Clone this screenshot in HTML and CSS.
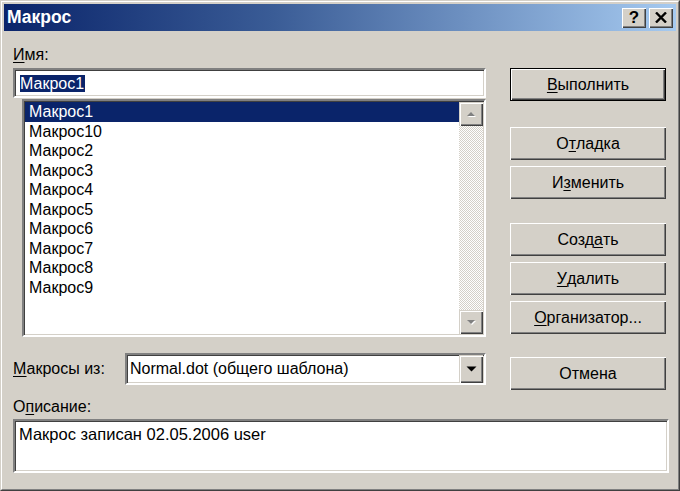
FILE: index.html
```html
<!DOCTYPE html>
<html lang="ru">
<head>
<meta charset="utf-8">
<title>Макрос</title>
<link rel="stylesheet" href="styles.css">
</head>
<body>
<div class="window">
  <div class="frame">
    <div class="titlebar">
      <div class="title">Макрос</div>
      <div class="tbtn help">?</div>
      <div class="tbtn close">
        <svg width="12" height="11" viewBox="0 0 12 11"><path d="M1 0.5 L11 10.5 M11 0.5 L1 10.5" stroke="#000" stroke-width="2.4" fill="none"/></svg>
      </div>
    </div>
    <div class="body">
      <div class="main">
        <div class="left">
          <div class="label"><u>И</u>мя:</div>
          <div class="field name-field"><span class="sel">Макрос1</span></div>
          <div class="field listbox">
            <div class="items">
              <div class="item selected">Макрос1</div>
              <div class="item">Макрос10</div>
              <div class="item">Макрос2</div>
              <div class="item">Макрос3</div>
              <div class="item">Макрос4</div>
              <div class="item">Макрос5</div>
              <div class="item">Макрос6</div>
              <div class="item">Макрос7</div>
              <div class="item">Макрос8</div>
              <div class="item">Макрос9</div>
            </div>
            <div class="vscroll">
              <div class="sbtn">
                <svg width="11" height="7" viewBox="0 0 11 7"><polygon points="2,6 6,2 10,6" fill="#fff"/><polygon points="1,5 5,1 9,5" fill="#808080"/></svg>
              </div>
              <div class="track"></div>
              <div class="sbtn">
                <svg width="11" height="7" viewBox="0 0 11 7"><polygon points="2,2 10,2 6,6" fill="#fff"/><polygon points="1,1 9,1 5,5" fill="#808080"/></svg>
              </div>
            </div>
          </div>
          <div class="combo-row">
            <div class="combo-label"><u>М</u>акросы из:</div>
            <div class="field combo">
              <div class="combo-text">Normal.dot (общего шаблона)</div>
              <div class="sbtn drop">
                <svg width="11" height="6" viewBox="0 0 11 6"><polygon points="0.5,0.5 10.5,0.5 5.5,5.5" fill="#000"/></svg>
              </div>
            </div>
          </div>
        </div>
        <div class="right">
          <div class="btn default"><span><u>В</u>ыполнить</span></div>
          <div class="btn gap-a">О<u>т</u>ладка</div>
          <div class="btn gap-s">И<u>з</u>менить</div>
          <div class="btn gap-b">Созд<u>а</u>ть</div>
          <div class="btn gap-s"><u>У</u>далить</div>
          <div class="btn gap-s"><u>О</u>рганизатор...</div>
          <div class="btn gap-c">Отмена</div>
        </div>
      </div>
      <div class="label desc-label">О<u>п</u>исание:</div>
      <div class="field desc">Макрос записан 02.05.2006 user</div>
    </div>
  </div>
</div>
</body>
</html>
```
FILE: styles.css
```css
html, body {
  margin: 0;
  padding: 0;
}
body {
  width: 680px;
  height: 491px;
  overflow: hidden;
  font-family: "Liberation Sans", Arial, sans-serif;
  font-size: 16px;
  color: #000;
  background: #d4d0c8;
}
u {
  text-decoration: underline;
  text-decoration-thickness: 1px;
  text-underline-offset: 2px;
}
.window {
  width: 680px;
  height: 491px;
  box-sizing: border-box;
  background: #d4d0c8;
  border: 1px solid;
  border-color: #d4d0c8 #404040 #404040 #d4d0c8;
}
.frame {
  height: 100%;
  box-sizing: border-box;
  border: 1px solid;
  border-color: #fff #808080 #808080 #fff;
  padding: 2px;
  display: flex;
  flex-direction: column;
}
.titlebar {
  height: 27px;
  flex: none;
  display: flex;
  align-items: center;
  padding: 0 3px 0 3px;
  background: linear-gradient(to right, #0a246a 0%, #3a5c96 40%, #a6caf0 100%);
  color: #fff;
  font-weight: bold;
  font-size: 17.5px;
}
.title {
  flex: 1;
  padding-left: 0;
  margin-top: -1px;
}
.tbtn {
  width: 24px;
  height: 20px;
  box-sizing: border-box;
  margin-left: 3px;
  background: #d4d0c8;
  box-shadow: inset 1px 1px #fff, inset -1px -1px #404040, inset -2px -2px #808080;
  display: flex;
  align-items: center;
  justify-content: center;
  color: #000;
  font-size: 17px;
  font-weight: bold;
  line-height: 20px;
}
.tbtn.help {
  padding-top: 1px;
}
.body {
  flex: 1;
  display: flex;
  flex-direction: column;
  padding: 15px 10px 0 9px;
}
.main {
  display: flex;
  gap: 24px;
}
.left {
  width: 473px;
  display: flex;
  flex-direction: column;
}
.right {
  width: 156px;
  margin-top: 22px;
  display: flex;
  flex-direction: column;
}
.label {
  line-height: 18px;
  height: 18px;
}
.field {
  box-sizing: border-box;
  background: #fff;
  border: 2px solid;
  border-color: #808080 #fff #fff #808080;
  box-shadow: inset 1px 1px #404040, inset -1px -1px #d4d0c8;
}
.name-field {
  margin-top: 4px;
  height: 30px;
  padding: 0 5px;
  display: flex;
  align-items: center;
}
.sel {
  background: #0a246a;
  color: #fff;
  line-height: 17px;
  padding: 0 1px 0 0;
}
.listbox {
  margin-top: 1px;
  margin-left: 9px;
  height: 238px;
  display: flex;
  padding: 1px 1px 1px 1px;
}
.items {
  flex: 1;
  padding-left: 0;
}
.item {
  height: 19.5px;
  line-height: 19.5px;
  padding-left: 4px;
  white-space: nowrap;
}
.item.selected {
  background: #0a246a;
  color: #fff;
}
.vscroll {
  width: 24px;
  display: flex;
  flex-direction: column;
}
.sbtn {
  width: 24px;
  height: 24px;
  flex: none;
  box-sizing: border-box;
  background: #d4d0c8;
  box-shadow: inset 1px 1px #d4d0c8, inset 2px 2px #fff, inset -1px -1px #404040, inset -2px -2px #808080;
  display: flex;
  align-items: center;
  justify-content: center;
}
.track {
  flex: 1;
  background-color: #fff;
  background-image: conic-gradient(#d4d0c8 25%, #fff 0 50%, #d4d0c8 0 75%, #fff 0);
  background-size: 2px 2px;
}
.combo-row {
  margin-top: 16px;
  display: flex;
  align-items: center;
}
.combo-label {
  width: 112px;
  flex: none;
}
.combo {
  width: 361px;
  height: 32px;
  display: flex;
  align-items: center;
  padding: 1px 1px 1px 3px;
}
.combo-text {
  flex: 1;
  white-space: nowrap;
}
.drop {
  height: 28px;
}
.btn {
  height: 33px;
  box-sizing: border-box;
  background: #d4d0c8;
  box-shadow: inset 1px 1px #fff, inset -1px -1px #404040, inset -2px -2px #808080;
  display: flex;
  align-items: center;
  justify-content: center;
  white-space: nowrap;
}
.btn.default {
  border: 1px solid #000;
  box-shadow: inset 1px 1px #fff, inset -1px -1px #404040, inset -2px -2px #808080;
}
.gap-a { margin-top: 26px; }
.gap-s { margin-top: 6px; }
.gap-b { margin-top: 24px; }
.gap-c { margin-top: 23px; }
.desc-label {
  margin-top: 8px;
}
.desc {
  margin-top: 3px;
  margin-right: -3px;
  height: 54px;
  padding: 4px 4px;
  font-size: 16.5px;
  line-height: 19px;
}
```
